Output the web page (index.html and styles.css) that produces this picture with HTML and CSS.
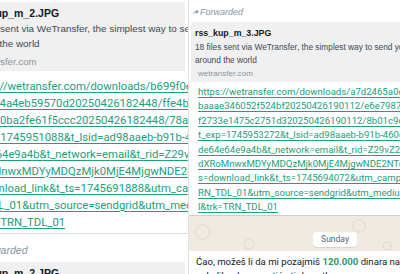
FILE: index.html
```html
<!doctype html>
<html>
  <head>
    <meta charset="utf-8">
    <title>WeTransfer links</title>
    <link rel="stylesheet" href="styles.css">
  </head>
  <body>
    <div class="shot shot-a">
      <div class="bubble msg-top">
        <div class="preview">
          <div class="p-title">rss_kup_m_2.JPG</div>
          <div class="p-desc">18 files sent via WeTransfer, the simplest way to send your files<br>around the world</div>
          <div class="p-site">wetransfer.com</div>
        </div>
        <a class="links" href="#">https://wetransfer.com/downloads/b699f0e2c4a1<br>9c1ef4a4eb59570d20250426182448/ffe4b1c2<br>5f3ed0ba2fe61f5ccc20250426182448/78a1c<br>_exp=1745951088&amp;t_lsid=ad98aaeb-b91b-460e<br>e64e64e9a4b&amp;t_network=email&amp;t_rid=Z29vZ2xlLW<br>XRoMnwxMDYyMDQzMjk0MjE4MjgwNDE2NTc<br>=download_link&amp;t_ts=1745691888&amp;utm_campaign<br>N_TDL_01&amp;utm_source=sendgrid&amp;utm_medium<br>l&amp;trk=TRN_TDL_01</a>
      </div>
      <div class="bubble">
        <div class="fwd">
          <svg class="fwd-icon" viewBox="0 0 16 14"><path d="M9.5 1 L15.5 6.5 L9.5 12 V8.6 C5 8.6 2.4 10 0.6 13 C1.2 8.2 4 5.2 9.5 4.6 Z"/></svg>
          <span>Forwarded</span>
        </div>
        <div class="preview">
          <div class="p-title">rss_kup_m_2.JPG</div>
        </div>
      </div>
    </div>

    <div class="shot shot-b">
      <div class="bubble">
        <div class="fwd">
          <svg class="fwd-icon" viewBox="0 0 16 14"><path d="M9.5 1 L15.5 6.5 L9.5 12 V8.6 C5 8.6 2.4 10 0.6 13 C1.2 8.2 4 5.2 9.5 4.6 Z"/></svg>
          <span>Forwarded</span>
        </div>
        <div class="preview">
          <div class="p-title">rss_kup_m_3.JPG</div>
          <div class="p-desc">18 files sent via WeTransfer, the simplest way to send your files<br>around the world</div>
          <div class="p-site">wetransfer.com</div>
        </div>
        <a class="links" href="#">https://wetransfer.com/downloads/a7d2465a0c3b9<br>baaae346052f524bf20250426190112/e6e7987a41d2<br>f2733e1475c2751d320250426190112/8b01c9d4e<br>t_exp=1745953272&amp;t_lsid=ad98aaeb-b91b-460e-9a4b<br>de64e64e9a4b&amp;t_network=email&amp;t_rid=Z29vZ2xlLW<br>dXRoMnwxMDYyMDQzMjk0MjE4MjgwNDE2NTcwNQ<br>s=download_link&amp;t_ts=1745694072&amp;utm_campaign<br>RN_TDL_01&amp;utm_source=sendgrid&amp;utm_medium<br>l&amp;trk=TRN_TDL_01</a>
      </div>
      <div class="day">
        <span class="pill">Sunday</span>
      </div>
      <div class="bubble msg-text">
        Ćao, možeš li da mi pozajmiš <b class="amount">120.000</b> dinara na<br>nekoliko dana, vratiću ti do petka
      </div>
    </div>
  </body>
</html>
```

FILE: styles.css
```css
body {
  margin: 0;
  width: 400px;
  height: 274px;
  overflow: hidden;
  display: flex;
  background: #fff;
  font-family: "Liberation Sans", Arial, sans-serif;
}

.shot {
  height: 274px;
  overflow: hidden;
}
.bubble {
  white-space: nowrap;
  box-sizing: border-box;
}
.links {
  display: block;
  font-family: Roboto, "Liberation Sans", sans-serif;
  color: #22a07b;
  text-decoration: underline;
  text-decoration-thickness: 1px;
  text-underline-offset: 1.5px;
}
.p-title {
  font-weight: bold;
  color: #111b21;
}
.p-desc {
  color: #3b4a54;
}
.p-site {
  color: #8a969e;
}
.fwd {
  display: flex;
  align-items: center;
  color: #8696a0;
  font-style: italic;
}
.fwd-icon {
  fill: #8696a0;
}
.preview {
  background: #f0f0f0;
}

/* left screenshot, larger scale, cropped on the left */
.shot-a {
  width: 188px;
  flex: none;
}
.shot-a .bubble {
  margin-left: -37px;
  width: 225px;
  padding-right: 3px;
}
.shot-a .msg-top {
  padding-top: 2px;
  padding-bottom: 2px;
  border-bottom: 1px solid #dddddd;
}
.shot-a .preview {
  padding: 3px 0 2px 3px;
}
.shot-a .p-title {
  padding-left: 2px;
  font-size: 10.5px;
  line-height: 16px;
}
.shot-a .p-desc {
  font-size: 9.9px;
  line-height: 15px;
}
.shot-a .p-site {
  font-size: 9.7px;
  line-height: 15px;
  margin-top: 3px;
  padding-left: 5px;
}
.shot-a .links {
  margin-top: 6.5px;
  padding-left: 8px;
  font-size: 11.3px;
  line-height: 17px;
}
.shot-a .fwd {
  padding: 9px 0 5px 5px;
  font-size: 10.6px;
  line-height: 14px;
}
.shot-a .fwd-icon {
  width: 8px;
  height: 7px;
  margin-right: 1px;
}

/* right screenshot, smaller scale */
.shot-b {
  flex: 1;
  background-color: #efeae2;
  background-image:
    radial-gradient(circle at 14px 232px, transparent 6px, #e6dfd4 6.5px, #e6dfd4 7.5px, transparent 8px),
    radial-gradient(circle at 60px 244px, transparent 4px, #e6dfd4 4.5px, #e6dfd4 5.5px, transparent 6px),
    radial-gradient(circle at 170px 226px, transparent 5px, #e6dfd4 5.5px, #e6dfd4 6.5px, transparent 7px),
    radial-gradient(circle at 198px 246px, transparent 3px, #e6dfd4 3.5px, #e6dfd4 4.5px, transparent 5px);
  border-left: 1px solid #e3e1dd;
}
.shot-b .bubble {
  width: 320px;
  background: #fff;
  box-shadow: 0 1px 0.5px rgba(11, 20, 26, 0.13);
}
.shot-b .fwd {
  padding: 5px 0 3px 4px;
  font-size: 9px;
  line-height: 14px;
}
.shot-b .fwd-icon {
  width: 6px;
  height: 6px;
  margin-right: 1px;
}
.shot-b .preview {
  margin-left: 2px;
  padding: 4px 0 2px 4px;
}
.shot-b .p-title {
  font-size: 8.8px;
  line-height: 15px;
}
.shot-b .p-desc {
  font-size: 8.3px;
  line-height: 13px;
}
.shot-b .p-site {
  font-size: 8.1px;
  line-height: 13px;
  padding-left: 3px;
}
.shot-b .links {
  margin-top: 3px;
  padding: 0 0 0.4px 9px;
  font-size: 9.6px;
  line-height: 14.4px;
}

.day {
  height: 36px;
  box-sizing: border-box;
  padding: 13px 0 0 124px;
}
.pill {
  display: inline-block;
  width: 44px;
  height: 15px;
  line-height: 15px;
  text-align: center;
  background: #fff;
  border-radius: 4px;
  font-family: Roboto, sans-serif;
  font-size: 8.5px;
  color: #54656f;
  box-shadow: 0 1px 0.5px rgba(11, 20, 26, 0.1);
}

.shot-b .msg-text {
  height: 40px;
  padding: 4px 0 0 7px;
  font-family: Roboto, sans-serif;
  font-size: 9.6px;
  line-height: 14px;
  color: #111b21;
}
.amount {
  color: #1f9d72;
}
```
